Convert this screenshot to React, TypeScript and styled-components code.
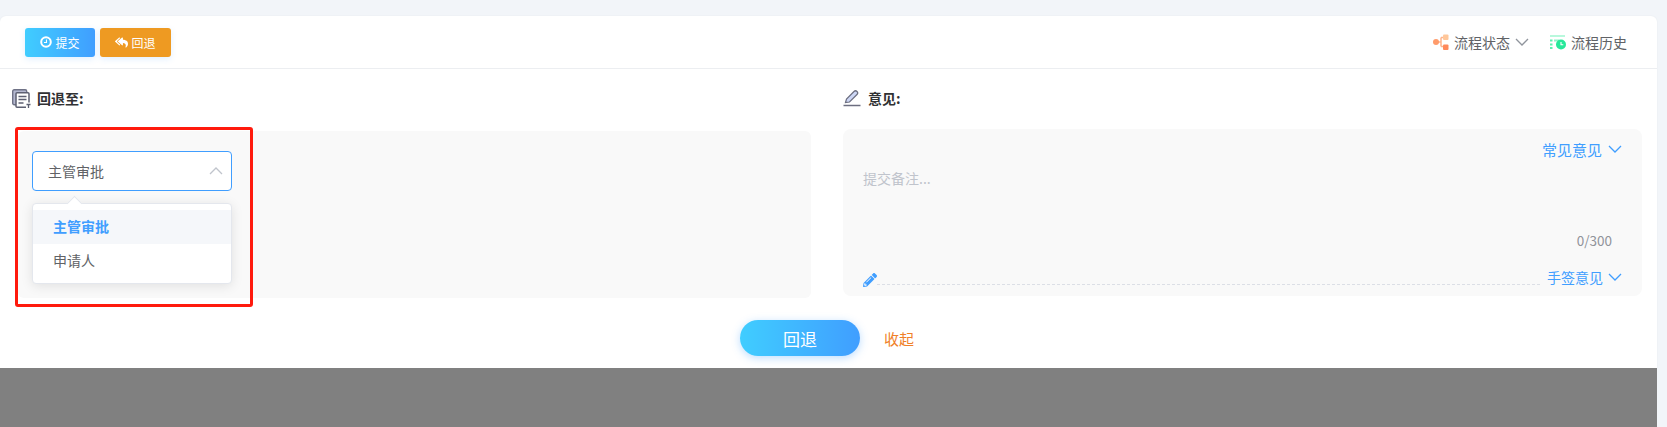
import React from 'react';
import styled, { createGlobalStyle } from 'styled-components';
import { FaPencilAlt, FaReplyAll } from 'react-icons/fa';

const GlobalStyle = createGlobalStyle`
  html, body {
    margin: 0;
    padding: 0;
    background: #f2f5f9;
    font-family: "Noto Sans CJK SC", "Liberation Sans", sans-serif;
    overflow: hidden;
  }
`;

const Page = styled.div`
  position: relative;
  width: 1667px;
  height: 427px;
  padding-top: 16px;
  box-sizing: border-box;
`;

const Card = styled.div`
  width: 1657px;
  height: 352px;
  background: #fff;
  border-radius: 6px 6px 0 0;
  box-shadow: 0 0 2px rgba(0, 0, 0, 0.06);
`;

const Toolbar = styled.div`
  display: flex;
  align-items: center;
  justify-content: space-between;
  height: 52px;
  padding: 0 30px 0 25px;
  border-bottom: 1px solid #eceef1;
`;

const ButtonGroup = styled.div`
  display: flex;
  gap: 5px;
`;

const ToolButton = styled.button<{ $tone: 'blue' | 'orange' }>`
  display: flex;
  align-items: center;
  justify-content: center;
  gap: 3px;
  width: ${props => (props.$tone === 'blue' ? '70px' : '71px')};
  height: 29px;
  padding: 0;
  border: 0;
  border-radius: 3px;
  color: #fff;
  font: inherit;
  font-size: 12px;
  background: ${props =>
    props.$tone === 'blue'
      ? 'linear-gradient(90deg, #40cdff, #409eff)'
      : '#ee9a22'};
  box-shadow: 0 2px 6px rgba(64, 158, 255, 0.16);
`;

const ToolLinks = styled.div`
  display: flex;
  align-items: center;
  gap: 21px;
`;

const ToolLink = styled.div`
  display: flex;
  align-items: center;
  gap: 5px;
  font-size: 14px;
  color: #606266;
`;

const Columns = styled.div`
  display: flex;
  height: 251px;
`;

const Column = styled.div<{ $width: number; $left: number }>`
  display: flex;
  flex-direction: column;
  width: ${props => props.$width}px;
  padding-left: ${props => props.$left}px;
  padding-top: 19px;
`;

const Heading = styled.div<{ $gap: number }>`
  display: flex;
  align-items: center;
  gap: ${props => props.$gap}px;
  height: 20px;
  font-size: 14px;
  font-weight: 700;
  color: #303133;
`;

const LeftPanel = styled.div`
  position: relative;
  height: 167px;
  margin: 23px 0 0 6px;
  padding: 20px 14px;
  background: #f9f9f9;
  border-radius: 6px;
  box-sizing: border-box;
`;

const Select = styled.div`
  display: flex;
  align-items: center;
  justify-content: space-between;
  width: 200px;
  height: 40px;
  padding: 0 8px 0 15px;
  background: #fff;
  border: 1px solid #409eff;
  border-radius: 4px;
  box-sizing: border-box;
  font-size: 14px;
  color: #606266;
`;

const Menu = styled.div`
  position: absolute;
  left: 14px;
  top: 72px;
  width: 200px;
  height: 81px;
  padding: 6px 0;
  background: #fff;
  border: 1px solid #e4e7ed;
  border-radius: 4px;
  box-sizing: border-box;
  box-shadow: 0 2px 12px rgba(0, 0, 0, 0.1);

  &::before {
    content: '';
    position: absolute;
    left: 36px;
    top: -6px;
    width: 10px;
    height: 10px;
    background: #fff;
    transform: rotate(45deg);
    border-top: 1px solid #e4e7ed;
    border-left: 1px solid #e4e7ed;
  }
`;

const MenuItem = styled.div<{ $active?: boolean }>`
  position: relative;
  height: 34px;
  line-height: 33px;
  padding-left: 20px;
  font-size: 14px;
  font-weight: ${props => (props.$active ? 700 : 400)};
  color: ${props => (props.$active ? '#409eff' : '#606266')};
  background: ${props => (props.$active ? '#f5f7fa' : 'transparent')};
`;

const RightPanel = styled.div`
  display: flex;
  flex-direction: column;
  height: 167px;
  margin-top: 21px;
  padding: 9px 20px 8px;
  background: #f9f9f9;
  border-radius: 8px;
  box-sizing: border-box;
`;

const BlueLink = styled.div<{ $size: number; $gap: number }>`
  display: flex;
  align-items: center;
  gap: ${props => props.$gap}px;
  font-size: ${props => props.$size}px;
  color: #409eff;
  white-space: nowrap;
`;

const TopRow = styled.div`
  display: flex;
  justify-content: flex-end;
  height: 22px;
`;

const Placeholder = styled.div`
  margin-top: 8px;
  height: 24px;
  font-size: 14px;
  line-height: 20px;
  color: #c0c4cc;
`;

const Counter = styled.div`
  margin-top: 39px;
  padding-right: 10px;
  text-align: right;
  font-size: 13.5px;
  line-height: 18px;
  color: #909399;
`;

const SignRow = styled.div`
  display: flex;
  align-items: flex-end;
  margin-top: 18px;
`;

const DashLine = styled.div`
  flex: 1;
  margin: 0 7px 2px 0;
  border-bottom: 1px dashed #dcdfe6;
`;

const Actions = styled.div`
  display: flex;
  align-items: center;
  height: 36px;
  padding-left: 740px;
  gap: 24px;
`;

const PrimaryButton = styled.button`
  width: 120px;
  height: 36px;
  padding: 0;
  border: 0;
  border-radius: 18px;
  color: #fff;
  font: inherit;
  font-size: 17px;
  background: linear-gradient(90deg, #40cdff, #409eff);
  box-shadow: 0 2px 8px rgba(64, 158, 255, 0.35);
`;

const Collapse = styled.span`
  font-size: 15px;
  color: #f07f28;
`;

const Overlay = styled.div`
  position: absolute;
  left: 0;
  right: 10px;
  top: 368px;
  bottom: 0;
  background: #808080;
`;

const Annotation = styled.div`
  position: absolute;
  left: 15px;
  top: 127px;
  width: 238px;
  height: 180px;
  border: 3px solid #ff1a0d;
  border-radius: 3px;
  box-sizing: border-box;
`;

const Chevron = ({ up, color }: { up?: boolean; color: string }) => (
  <svg width="14" height="8" viewBox="0 0 14 8" fill="none">
    <path d={up ? 'M1 7l6-6 6 6' : 'M1 1l6 6 6-6'} stroke={color} strokeWidth="1.300" />
  </svg>
);

const ClockIcon = () => (
  <svg width="12" height="12" viewBox="0 0 12 12" fill="none">
    <circle cx="6" cy="6" r="4.800" stroke="#fff" strokeWidth="2" />
    <path d="M6.500 3.500v3H4" stroke="#fff" strokeWidth="1.100" />
  </svg>
);

const FormIcon = () => (
  <svg width="19" height="19" viewBox="0 0 19 19" fill="none">
    <rect x="0.700" y="0.700" width="14" height="15" rx="1.500" fill="#b4b8d0" stroke="#6f7286" strokeWidth="1.400" />
    <rect x="4" y="3.700" width="13" height="14.500" rx="1" fill="#fff" stroke="#5d6072" strokeWidth="1.500" />
    <path d="M6.500 7.500h8M6.500 10.500h8M6.500 14h5" stroke="#5d6072" strokeWidth="1.300" />
    <path d="M14 13.500h5V19h-5z" fill="#fff" />
    <path d="M14.500 15.500h4M16.500 15.500V19" stroke="#5d6072" strokeWidth="1.300" />
  </svg>
);

const PenIcon = () => (
  <svg width="18" height="18" viewBox="0 0 18 18" fill="none">
    <path d="M2.500 13.500l1-3.500 7.500-7.500c1-1 2-1 3 0s1 2 0 3L6.500 13z" fill="#cdd6f5" stroke="#6c6e80" strokeWidth="1.200" />
    <path d="M0.500 16.500h17" stroke="#6c6e80" strokeWidth="1.500" />
  </svg>
);

const FlowIcon = () => (
  <svg width="16" height="16" viewBox="0 0 16 16">
    <path d="M5 8h3M8 3.500v9M8 3.500h3M8 12.500h3" stroke="#ffb48c" strokeWidth="1.500" fill="none" />
    <circle cx="3" cy="8" r="3" fill="#ff9b6b" />
    <rect x="10" y="0.500" width="5.500" height="5.500" rx="1" fill="#ffc79a" />
    <rect x="10" y="10.500" width="5.500" height="5.500" rx="1" fill="#ff8a5c" />
  </svg>
);

const HistoryIcon = () => (
  <svg width="16" height="16" viewBox="0 0 16 16">
    <rect x="0" y="1" width="15" height="2" fill="#b8f8dc" />
    <rect x="0" y="5.500" width="2.500" height="2" fill="#5cf0b0" />
    <rect x="4" y="5.500" width="5" height="2" fill="#8ef5c8" />
    <rect x="0" y="9.500" width="2.500" height="2" fill="#5cf0b0" />
    <rect x="0" y="13" width="2.500" height="2" fill="#5cf0b0" />
    <circle cx="11" cy="10.500" r="5" fill="#27e89a" />
    <path d="M11 8v2.700h2.300" stroke="#fff" strokeWidth="1.100" fill="none" />
  </svg>
);

const App: React.FC = () => {
  return (
    <Page>
      <GlobalStyle />
      <Card>
        <Toolbar>
          <ButtonGroup>
            <ToolButton $tone="blue">
              <ClockIcon />
              提交
            </ToolButton>
            <ToolButton $tone="orange">
              <FaReplyAll size={13} />
              回退
            </ToolButton>
          </ButtonGroup>
          <ToolLinks>
            <ToolLink>
              <FlowIcon />
              流程状态
              <Chevron color="#8f949c" />
            </ToolLink>
            <ToolLink>
              <HistoryIcon />
              流程历史
            </ToolLink>
          </ToolLinks>
        </Toolbar>
        <Columns>
          <Column $width={799} $left={12}>
            <Heading $gap={6}>
              <FormIcon />
              回退至:
            </Heading>
            <LeftPanel>
              <Select>
                主管审批
                <Chevron up color="#c0c4cc" />
              </Select>
              <Menu>
                <MenuItem $active>主管审批</MenuItem>
                <MenuItem>申请人</MenuItem>
              </Menu>
            </LeftPanel>
          </Column>
          <Column $width={799} $left={32}>
            <Heading $gap={7}>
              <PenIcon />
              意见:
            </Heading>
            <RightPanel>
              <TopRow>
                <BlueLink $size={15} $gap={6}>
                  常见意见
                  <Chevron color="#409eff" />
                </BlueLink>
              </TopRow>
              <Placeholder>提交备注...</Placeholder>
              <Counter>0/300</Counter>
              <SignRow>
                <FaPencilAlt size={14} color="#409eff" />
                <DashLine />
                <BlueLink $size={14} $gap={5}>
                  手签意见
                  <Chevron color="#409eff" />
                </BlueLink>
              </SignRow>
            </RightPanel>
          </Column>
        </Columns>
        <Actions>
          <PrimaryButton>回退</PrimaryButton>
          <Collapse>收起</Collapse>
        </Actions>
      </Card>
      <Overlay />
      <Annotation />
    </Page>
  );
};

export default App;
